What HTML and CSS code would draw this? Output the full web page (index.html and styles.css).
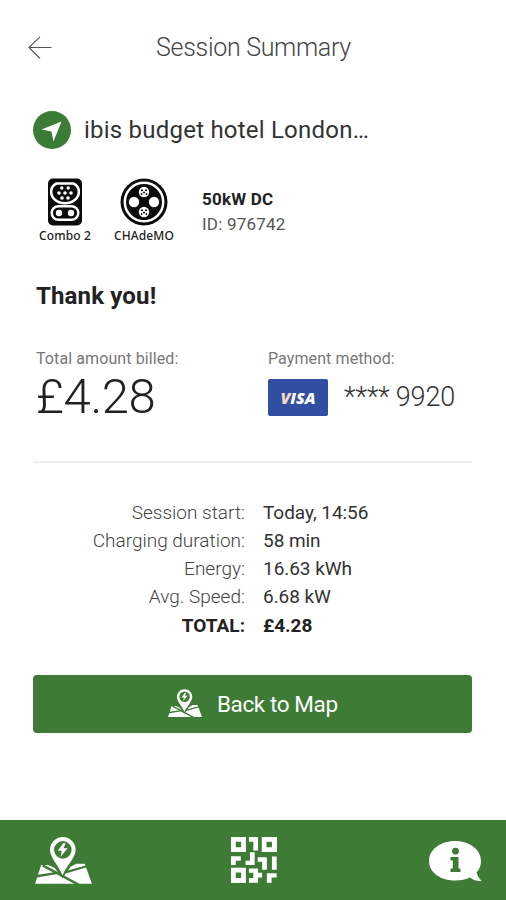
FILE: index.html
```html
<!DOCTYPE html>
<html lang="en">
<head>
<meta charset="utf-8">
<title>Session Summary</title>
<link rel="stylesheet" href="styles.css">
</head>
<body>
<svg class="defs" aria-hidden="true">
  <symbol id="map" viewBox="0 0 168 142">
    <path fill="currentColor" d="M18 83H148L168 138H0Z"/>
    <path class="cut" stroke-width="7" d="M22 84L64 106L128 141M0 117L66 106M90 105L152 86"/>
    <path class="cut-fill" d="M28 78L58 92L72 110L81 122L92 106L112 85L145 76L145 70H28Z"/>
    <path fill="currentColor" d="M104 89L121 79H146L149 84L98 98Z"/>
    <path fill="currentColor" fill-rule="evenodd" d="M82 0C61 0 44 17 44 38C44 62 70 85 81 113C93 85 120 62 120 38C120 17 103 0 82 0ZM82 12A26 26 0 1 1 82 64A26 26 0 1 1 82 12Z"/>
    <path fill="currentColor" d="M84 18L67 41H79L75 59L96 33H84L90 19Z"/>
  </symbol>
</svg>
<div class="screen">
  <header class="top">
    <svg class="back" viewBox="0 0 24 24"><path d="M23.5 11.5H1M12 .8L1 11.5L12 22.5"/></svg>
    <h1>Session Summary</h1>
  </header>
  <main>
    <div class="place">
      <svg viewBox="0 0 38 38"><circle cx="19" cy="19" r="19"/><path d="M28.5 10.5L20.5 30.5L18.5 20.5L8.5 18.5Z"/></svg>
      <h2>ibis budget hotel London…</h2>
    </div>
    <div class="charger">
      <div class="plug combo">
        <svg viewBox="0 0 34 48">
          <rect width="34" height="47" y=".5" rx="5"/>
          <g class="line"><path d="M8.5 5.5H25.5Q31 8 30.8 14A13.8 11.3 0 0 1 3.2 14Q3 8 8.5 5.5Z"/><rect x="3.7" y="28.2" width="26.6" height="13.6" rx="6.8"/></g>
          <g class="dot"><circle cx="13.8" cy="10" r="1.7"/><circle cx="20.2" cy="10" r="1.7"/><circle cx="11" cy="15" r="1.8"/><circle cx="17" cy="15" r="1.8"/><circle cx="23" cy="15" r="1.8"/><circle cx="14" cy="20" r="1.8"/><circle cx="20" cy="20" r="1.8"/><circle cx="11" cy="35" r="3.2"/><circle cx="23" cy="35" r="3.2"/></g>
        </svg>
        <span>Combo 2</span>
      </div>
      <div class="plug chademo">
        <svg viewBox="0 0 48 48">
          <circle cx="24" cy="24" r="23.5"/>
          <circle class="line" cx="24" cy="24" r="19.2"/>
          <g class="dot"><circle cx="14" cy="24" r="5.2"/><circle cx="34" cy="24" r="5.2"/><circle cx="24" cy="14" r="5.2"/><circle cx="24" cy="34" r="5.2"/></g>
          <g><circle cx="22" cy="12.3" r="1"/><circle cx="26" cy="12.3" r="1"/><circle cx="24" cy="14.5" r="1"/><circle cx="21.6" cy="16" r=".9"/><circle cx="26.4" cy="16" r=".9"/><circle cx="22" cy="32.3" r="1"/><circle cx="26" cy="32.3" r="1"/><circle cx="24" cy="34.5" r="1"/><circle cx="21.6" cy="36" r=".9"/><circle cx="26.4" cy="36" r=".9"/></g>
        </svg>
        <span>CHAdeMO</span>
      </div>
      <div class="spec"><b>50kW DC</b><span>ID: 976742</span></div>
    </div>
    <h3>Thank you!</h3>
    <div class="billing">
      <div class="billed"><p>Total amount billed:</p><span class="amount">£4.28</span></div>
      <div class="payment"><p>Payment method:</p>
        <div class="card-row"><span class="visa">VISA</span><span class="stars">****</span><span class="digits">9920</span></div>
      </div>
    </div>
    <dl>
      <dt>Session start:</dt><dd>Today, 14:56</dd>
      <dt>Charging duration:</dt><dd>58 min</dd>
      <dt>Energy:</dt><dd>16.63 kWh</dd>
      <dt>Avg. Speed:</dt><dd>6.68 kW</dd>
      <dt class="total">TOTAL:</dt><dd class="total">£4.28</dd>
    </dl>
    <button type="button"><svg><use href="#map"/></svg><span>Back to Map</span></button>
  </main>
  <nav>
    <svg class="nav-map"><use href="#map"/></svg>
    <svg class="nav-qr" viewBox="0 0 136 136">
      <path fill-rule="evenodd" d="M0 0H44V44H0ZM14 14V30H30V14ZM91 0H136V44H91ZM105 14V30H121V14ZM0 91H44V136H0ZM14 105V121H30V105Z"/>
      <path d="M53 0H80V40H66V14H53ZM0 57H29V70H14V83H0ZM56 45H70V83H43V70H56ZM79 60H106V97H92V73H79ZM121 58H135V97H121ZM53 93H80V106H92V120H80V135H53V121H66V106H53ZM106 107H135V120H120V135H106Z"/>
    </svg>
    <svg class="nav-info" viewBox="0 0 53 42">
      <path d="M26 0C11 0 0 9 0 20C0 31 11 39.5 26 39.5C32 39.5 37 38.3 41 36.5Q46 40.5 52.5 40Q49 37 47.5 31.5Q52 27 52 20C52 9 41 0 26 0Z"/>
      <g><circle cx="26.5" cy="10.2" r="3.4"/><path d="M21.5 16H29.5V27.5H31.5V31H21.5V27.5H23.8V19.5H21.5Z"/></g>
    </svg>
  </nav>
</div>
</body>
</html>
```

FILE: styles.css
```css
* { box-sizing: border-box; margin: 0; padding: 0; }
body { background: #fff; font-family: Roboto, "Liberation Sans", sans-serif; color: #333; }
.defs { display: block; width: 0; height: 0; }
.cut { fill: none; stroke: #3e7c35; }
.cut-fill { fill: #3e7c35; }
.screen { width: 506px; height: 900px; display: flex; flex-direction: column; }
.top { height: 95px; display: flex; align-items: center; padding-left: 28px; }
.back { width: 24px; height: 24px; fill: none; stroke: #555; stroke-width: 1.1; }
h1 { margin-left: 104px; font-size: 25px; font-weight: 300; letter-spacing: -.3px; color: #444; white-space: nowrap; }
main { flex: 1; padding: 0 34px 0 33px; }
.place { display: flex; align-items: center; height: 70px; }
.place svg { width: 38px; height: 38px; fill: #3a7c35; }
.place svg path { fill: #fff; }
h2 { margin-left: 13px; font-size: 24px; font-weight: 400; letter-spacing: .22px; white-space: nowrap; }
.charger { display: flex; height: 106px; padding-top: 13px; }
.plug { display: flex; flex-direction: column; align-items: center; font: 500 12px "Noto Sans", sans-serif; letter-spacing: .1px; color: #222; white-space: nowrap; }
.plug svg { height: 48px; fill: #0b0b0b; }
.plug span { line-height: 16px; margin-top: 2px; }
.plug .line { fill: none; stroke: #fff; stroke-width: 2.5; }
.plug .dot { fill: #fff; }
.combo { width: 64px; }
.chademo { width: 94px; }
.spec { display: flex; flex-direction: column; margin-left: 11px; padding-top: 9px; font-size: 17px; line-height: 25px; letter-spacing: .2px; white-space: nowrap; }
.spec b { font-weight: 700; color: #222; }
.spec span { color: #555; }
h3 { height: 78px; padding-left: 3px; font-size: 24px; line-height: 50px; font-weight: 700; letter-spacing: .15px; color: #222; }
.billing { display: flex; height: 114px; padding-left: 3px; border-bottom: 2px solid #eee; white-space: nowrap; }
.billed { width: 232px; }
.billing p { font-size: 16px; line-height: 20px; letter-spacing: .1px; color: #777; }
.amount { display: block; font-size: 49px; line-height: 56px; font-weight: 300; letter-spacing: -.4px; color: #222; }
.card-row { display: flex; align-items: center; height: 38px; margin-top: 9px; font-size: 27px; font-weight: 300; color: #333; }
.visa { width: 60px; height: 37px; border-radius: 2px; background: #304ea2; color: #fff; font: italic 800 16px/38px "Open Sans", sans-serif; text-align: center; }
.visa::first-letter { color: #f2d9c4; }
.stars { margin-left: 16px; }
.digits { margin-left: 6px; letter-spacing: -.2px; }
dl { display: grid; grid-template-columns: 212px 1fr; column-gap: 18px; grid-auto-rows: 28.3px; margin-top: 34.6px; font-size: 19px; line-height: 29px; white-space: nowrap; }
dt { text-align: right; font-weight: 300; color: #444; }
dd { color: #333; letter-spacing: -.05px; }
dl .total { font-weight: 700; color: #222; }
button { display: flex; align-items: center; width: 439px; height: 58px; margin-top: 35.9px; padding-left: 135px; border: 0; border-radius: 4px; background: #3e7c35; color: #fff; font: 400 22.5px Roboto, sans-serif; }
button svg { width: 34px; height: 29px; }
button span { margin-left: 15px; letter-spacing: -.4px; white-space: nowrap; }
nav { height: 80px; display: flex; padding-left: 35px; background: #3e7c35; color: #fff; }
nav svg { fill: #fff; }
.nav-map { width: 57px; height: 48px; margin-top: 17px; }
.nav-qr { width: 46px; height: 46px; margin: 17px 0 0 139px; }
.nav-info { width: 53px; height: 42px; margin: 21px 0 0 152px; }
.nav-info g { fill: #3e7c35; }
```
